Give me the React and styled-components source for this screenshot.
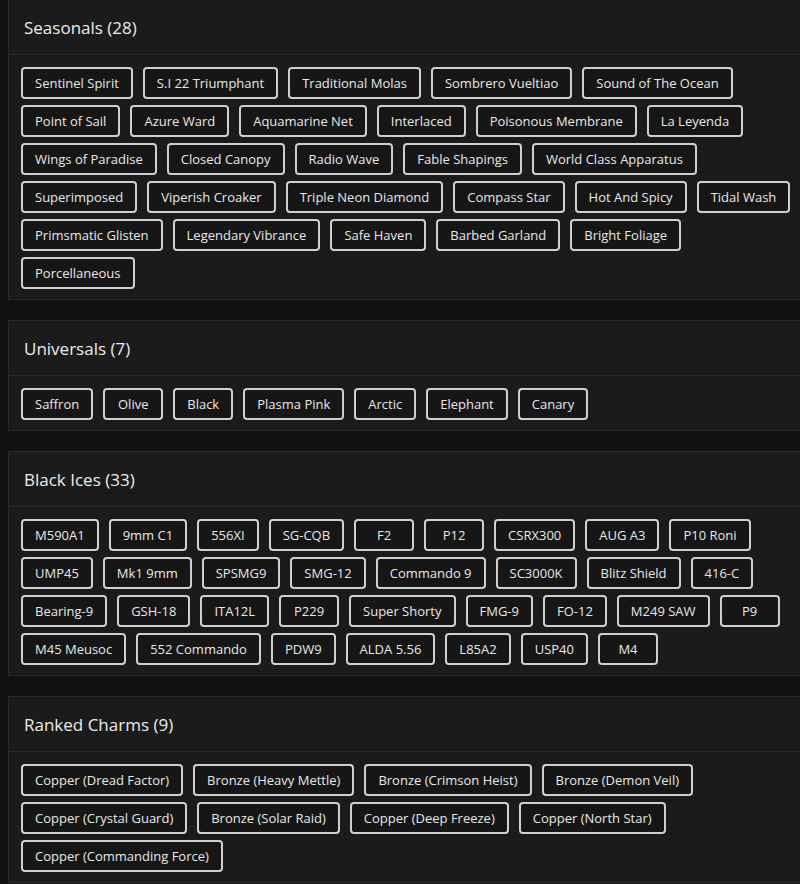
import React from 'react';
import styled, { createGlobalStyle } from 'styled-components';

const sections = [
    {
        title: 'Seasonals',
        items: ['Sentinel Spirit','S.I 22 Triumphant','Traditional Molas','Sombrero Vueltiao','Sound of The Ocean','Point of Sail','Azure Ward','Aquamarine Net','Interlaced','Poisonous Membrane','La Leyenda','Wings of Paradise','Closed Canopy','Radio Wave','Fable Shapings','World Class Apparatus','Superimposed','Viperish Croaker','Triple Neon Diamond','Compass Star','Hot And Spicy','Tidal Wash','Primsmatic Glisten','Legendary Vibrance','Safe Haven','Barbed Garland','Bright Foliage','Porcellaneous'],
    },
    {
        title: 'Universals',
        items: ['Saffron','Olive','Black','Plasma Pink','Arctic','Elephant','Canary'],
    },
    {
        title: 'Black Ices',
        items: ['M590A1','9mm C1','556XI','SG-CQB','F2','P12','CSRX300','AUG A3','P10 Roni','UMP45','Mk1 9mm','SPSMG9','SMG-12','Commando 9','SC3000K','Blitz Shield','416-C','Bearing-9','GSH-18','ITA12L','P229','Super Shorty','FMG-9','FO-12','M249 SAW','P9','M45 Meusoc','552 Commando','PDW9','ALDA 5.56','L85A2','USP40','M4'],
    },
    {
        title: 'Ranked Charms',
        items: ['Copper (Dread Factor)','Bronze (Heavy Mettle)','Bronze (Crimson Heist)','Bronze (Demon Veil)','Copper (Crystal Guard)','Bronze (Solar Raid)','Copper (Deep Freeze)','Copper (North Star)','Copper (Commanding Force)'],
    },
];

const App = () => {
    return (
        <>
            <GlobalStyle />
            <Page>
                {sections.map((s) => (
                    <Card key={s.title}>
                        <CardHeader>
                            <CardTitle>{s.title} ({s.items.length})</CardTitle>
                        </CardHeader>
                        <CardBody>
                            {s.items.map((item) => (
                                <Tag key={item}>{item}</Tag>
                            ))}
                        </CardBody>
                    </Card>
                ))}
            </Page>
        </>
    );
};

const GlobalStyle = createGlobalStyle`
    html, body {
        margin:0;
        padding:0;
        background:#111111;
        overflow:hidden;
    }
    body{
        font-family: 'Open Sans', 'Liberation Sans', sans-serif;
    }
`;

const Page = styled.main`
    width:808px;
    padding-left:8px;
    box-sizing:border-box;
    display:flex;
    flex-direction:column;
    gap:20px;
`;

const Card = styled.section`
    background:#1b1b1b;
    border:1px solid #2a2a2a;
    border-top:none;
    &:not(:first-child){
        border-top:1px solid #2a2a2a;
    }
`;

const CardHeader = styled.header`
    height:54px;
    display:flex;
    align-items:center;
    padding:0 15px;
    border-bottom:1px solid #2a2a2a;
`;

const CardTitle = styled.h2`
    margin:0;
    font-size:17px;
    font-weight:500;
    color:#ececec;
`;

const CardBody = styled.div`
    display:flex;
    flex-wrap:wrap;
    gap:6px 10px;
    padding:12px 12px 10px 12px;
`;

const Tag = styled.span`
    box-sizing:border-box;
    min-width:60px;
    height:32px;
    padding:0 12px;
    display:inline-flex;
    align-items:center;
    justify-content:center;
    border:2px solid #cfcfcf;
    border-radius:4px;
    background:#161616;
    color:#e8e8e8;
    font-size:13px;
    white-space:nowrap;
`;

export default App;
